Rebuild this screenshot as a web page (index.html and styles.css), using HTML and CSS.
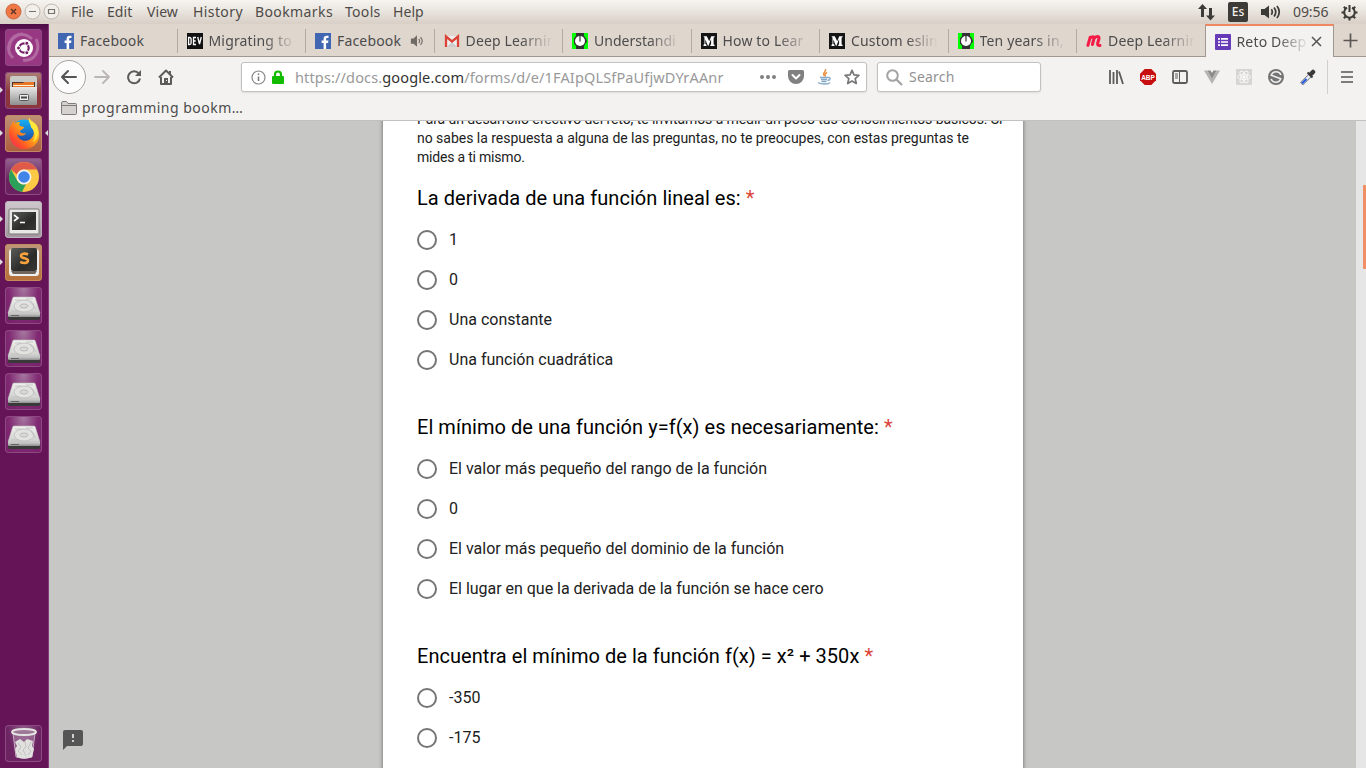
FILE: index.html
```html
<!DOCTYPE html>
<html lang="es">
<head>
<meta charset="utf-8">
<title>Reto Deep Learning</title>
<link rel="stylesheet" href="styles.css">
</head>
<body>
<svg class="defs" width="0" height="0">
  <defs>
    <linearGradient id="metal" x1="0" y1="0" x2="0" y2="1"><stop offset="0" stop-color="#e9e9e9"/><stop offset="1" stop-color="#8f8f8f"/></linearGradient>
    <linearGradient id="plate" x1="0" y1="0" x2="0" y2="1"><stop offset="0" stop-color="#f1f1ef"/><stop offset="1" stop-color="#cfcfcd"/></linearGradient>
    <linearGradient id="flame" x1="1" y1="0" x2="0" y2="1"><stop offset="0" stop-color="#fff24a"/><stop offset=".45" stop-color="#ffa016"/><stop offset=".75" stop-color="#ff4b2b"/><stop offset="1" stop-color="#e3257b"/></linearGradient>
    <linearGradient id="globe" x1="0" y1="0" x2="0" y2="1"><stop offset="0" stop-color="#16b0f4"/><stop offset="1" stop-color="#203a9c"/></linearGradient>
    <linearGradient id="dark" x1="0" y1="0" x2="1" y2="1"><stop offset="0" stop-color="#5a5c58"/><stop offset=".6" stop-color="#2b2c2a"/><stop offset="1" stop-color="#383936"/></linearGradient>
  </defs>
  <symbol id="facebook" viewBox="0 0 16 16"><path fill="#4267b2" d="M0 0h16v16H0z"/><path fill="#fff" d="M8.600 16V10H6.600V7.500h2V5.800c0-2 1.200-3.100 3-3.100h1.900V5h-1.200c-1 0-1.200.5-1.200 1.200v1.300h2.300l-.3 2.500h-2v6z"/></symbol>
  <symbol id="medium" viewBox="0 0 16 16"><path fill="#151515" d="M0 0h16v16H0z"/><path fill="#fff" d="M2.500 3.200h3.300l2.400 5.100 2.100-5.100h3.300v.7l-1 .8v6.600l1 .8v.8H9.200v-.8l.9-.8V6L7.500 12.700h-.6L4.300 6.500v4.300l1.200 1.300v.8h-3v-.8l1-1.300v-6z"/></symbol>
  <symbol id="watch" viewBox="0 0 16 16"><path fill="#0f0" d="M0 0h16v16H0z"/><path fill="#333" d="M4 0h8v3l2 2.300v1.200h.8v3H14L12 13v3H4v-3L2 10.500V5.300L4 3z"/><circle cx="8" cy="8" r="5" fill="#fff"/><path stroke="#333" stroke-width="1.200" d="M8 3v5.500"/></symbol>
  <symbol id="meetup" viewBox="0 0 16 16"><path fill="none" stroke="#f61b47" stroke-width="3" stroke-linecap="round" stroke-linejoin="round" d="M1.900 12.400 4.200 4.200M4 5.500C5.500 3.200 8.500 3 8 5.500L6.400 11.500M8 5.500C9.800 3 13.600 2.800 13 5.500L11.600 10.500q-.4 2.300 2.400 2"/></symbol>
  <symbol id="speaker" viewBox="0 0 16 16"><path fill="currentColor" d="M1 5h3l4-3.500v13L4 11H1z"/><path fill="none" stroke="currentColor" stroke-width="1.300" d="M10 5.500q2 2.500 0 5M12 3.500q4 4.500 0 9"/></symbol>
  <symbol id="disk" viewBox="0 0 34 30"><path fill="#393939" d="M1 20h32v5q0 2-2 2H3q-2 0-2-2z"/><path fill="url(#metal)" d="M1 19h32v4q0 1-1 1H2q-1 0-1-1z"/><path fill="url(#plate)" stroke="#bbb" stroke-width=".6" d="M7 4h20q1 0 1.300 1L33 20H1L5.700 5Q6 4 7 4z"/><ellipse cx="17" cy="13" rx="10" ry="6" fill="#e2e2e0" stroke="#c3c3c1"/><ellipse cx="17" cy="13" rx="4" ry="2" fill="#dadad8" stroke="#bbb"/><path fill="none" stroke="#bbb" stroke-width=".8" d="M8 7h6M19 6h7M23 8l6 8M4 18h8"/><path stroke="#666" d="M4 22.500h8"/></symbol>
</svg>

<header class="panel">
  <div class="winbtns">
    <svg width="60" height="24" viewBox="0 0 60 24"><circle cx="13.500" cy="11.500" r="7.500" fill="#f07746" stroke="#cc663c"/><path d="m11 9 5 5m0-5-5 5" stroke="#5b3527" stroke-width="1.400"/><g fill="#f2eeea" stroke="#bcb5ae"><circle cx="32.500" cy="11.500" r="7.500"/><circle cx="51.500" cy="11.500" r="7.500"/></g><path d="M29 11.500h7M48.500 9.500h6v4h-6z" stroke="#77726d" stroke-width="1.200" fill="none"/></svg>
  </div>
  <nav class="menu"><span class="m-file">File</span><span class="m-edit">Edit</span><span class="m-view">View</span><span class="m-history">History</span><span class="m-bookmarks">Bookmarks</span><span class="m-tools">Tools</span><span>Help</span></nav>
  <div class="tray">
    <svg class="net" width="17" height="17" viewBox="0 0 17 17"><path fill="#3c3b37" d="M4.500 0 9 5H6v8H3V5H0zM12.500 16.500 17 11.500h-3V4h-3v7.500H8z"/></svg>
    <span class="lang">Es</span>
    <svg class="vol" width="20" height="16" viewBox="0 0 20 16"><path fill="#3c3b37" d="M0 5h3.500L8 1.500v13L3.500 11H0z"/><path fill="none" stroke="#3c3b37" stroke-width="1.700" d="M10.300 5.300q2 2.700 0 5.400M13 3.500q3.500 4.500 0 9M16 2q4.500 6 0 12"/></svg>
    <time class="clock">09:56</time>
    <svg class="gear" width="17" height="17" viewBox="0 0 17 17"><g stroke="#3c3b37" fill="none" stroke-width="2"><path d="M6 3.700a5.300 5.300 0 1 0 5 0"/><path d="M8.500 1v7M.5 8.500h3M13.500 8.500h3M2.800 2.800 5 5M14.200 2.800 12 5M2.800 14.200 5 12M14.200 14.200 12 12M8.500 13.500v3"/></g></svg>
  </div>
</header>

<div class="desktop">
  <aside class="launcher">
    <div class="tile dash"><svg width="37" height="37" viewBox="0 0 37 37"><g fill="none" stroke="#fff" stroke-opacity=".25" stroke-width="3"><path d="M4 20C5 7 17 1 27 10M31 10c5 10-1 23-13 21M8 29C-1 20 5 5 18 5"/></g><circle cx="19" cy="19" r="9" fill="#fff"/><circle cx="19" cy="19" r="4.700" fill="none" stroke="#762065" stroke-width="2.200"/><g fill="#762065" stroke="#fff"><circle cx="13.500" cy="19" r="2"/><circle cx="21.800" cy="14.300" r="2"/><circle cx="21.800" cy="23.700" r="2"/></g></svg></div>
    <div class="tile files running"><svg width="37" height="37" viewBox="0 0 37 37"><path fill="#c9c9c6" d="M7 4h23q2 0 2 2v26H5V6q0-2 2-2z"/><path fill="#50352a" d="M7 10h23v6H7z"/><path fill="#e97527" d="M8 11h10l1-1h10v5H8z"/><path fill="#fff3d5" d="M8 13h21v1H8z"/><path fill="url(#metal)" d="M5 15h27v17q0 1-1 1H6q-1 0-1-1z"/><rect x="14.500" y="22.500" width="9" height="6" rx="1" fill="#eee" stroke="#555"/><path stroke="#444" stroke-width="2" d="M16 25.500h6"/></svg></div>
    <div class="tile firefox running focused"><svg width="37" height="37" viewBox="0 0 37 37"><circle cx="19" cy="17" r="12.500" fill="url(#globe)"/><path fill="url(#flame)" d="M4 17C4 12 7 8 9 6v3c2-2 4-2 6-2-1 2-1 3 0 4l4 1c0 2-4 3-4 4 0 2 3 3 6 2-2 4-7 3-9 1 1 6 7 8 12 6 6-3 6-10 2-13l1-1c-1-4-4-5-3-8 2 4 6 4 8 8 6 12-1 23-13 23C10 34 4 27 4 17z"/><path fill="#ffe83b" d="M24 3c2 4 6 4 8 8 2 7 1 13-4 16 3-6 2-11-2-15 0-3-3-5-2-9z"/></svg></div>
    <div class="tile chrome"><svg width="37" height="37" viewBox="0 0 37 37"><circle cx="19" cy="19" r="15" fill="#fbc943"/><path fill="#df5a4b" d="M6 11.500A15 15 0 0 1 32 11.500H19a7.500 7.500 0 0 0-7 5z"/><path fill="#2ba05b" d="M6 11.500 12.500 23A7.500 7.500 0 0 0 21 26l-4 8A15 15 0 0 1 6 11.500z"/><circle cx="19" cy="19" r="7.400" fill="#f3f3f3"/><circle cx="19" cy="19" r="5.800" fill="#4285e8"/></svg></div>
    <div class="tile term running"><svg width="37" height="37" viewBox="0 0 37 37"><rect x="4" y="8" width="30" height="25" rx="1" fill="#e8e8e6" stroke="#777"/><path fill="url(#dark)" d="M7 11h24v18H7z"/><path fill="none" stroke="#fff" stroke-width="1.600" d="m9 14 4 3-4 3M15 21.500h5"/></svg></div>
    <div class="tile sublime running"><svg width="37" height="37" viewBox="0 0 37 37"><rect x="4" y="5" width="30" height="27" rx="3" fill="#eee"/><path fill="#70665d" d="M6 27h26l-2 3H8z"/><rect x="6" y="4" width="26" height="23" rx="2" fill="url(#dark)"/><path fill="none" stroke="#f8a33b" stroke-width="2.600" d="M23 10.500c-2.600-1.300-7-1.200-7 1.500s7 2 7 4.600-4.400 3-7.800 1.300"/></svg></div>
    <div class="tile"><svg class="drive"><use href="#disk"/></svg></div>
    <div class="tile"><svg class="drive"><use href="#disk"/></svg></div>
    <div class="tile"><svg class="drive"><use href="#disk"/></svg></div>
    <div class="tile"><svg class="drive"><use href="#disk"/></svg></div>
    <div class="tile trash"><svg width="37" height="37" viewBox="0 0 37 37"><path fill="#fff" fill-opacity=".2" stroke="#d8c8d5" stroke-width=".8" d="m8 8 3 24q8 3 16 0l3-24"/><ellipse cx="19" cy="7" rx="12" ry="3" fill="#9d7897" stroke="#e5e5e3" stroke-width="2"/><path fill="#e0e0de" d="m10 17 5-3 4 3 3-3 6 2-1 5 2 3-2 8q-8 3-15 0l-2-8 2-3z"/><path fill="none" stroke="#c2c2c0" d="m13 18 3 4-3 4 4 4M20 17l1 5-3 3 3 6M26 17l-3 6 3 3-3 4"/></svg></div>
  </aside>

  <main class="browser">
    <div class="tabs">
      <div class="tab"><svg class="fav"><use href="#facebook"/></svg><span class="label">Facebook</span></div>
      <div class="tab"><svg class="fav" viewBox="0 0 16 16"><path fill="#111" d="M0 0h16v16H0z"/><path fill="none" stroke="#fff" stroke-width="1.300" d="M1.600 4.500v7h1q1.500 0 1.500-1.500V6q0-1.500-1.500-1.500zM9 4.500H6.500v7H9M6.500 8h2.200M10.700 4l1.800 7 1.800-7"/></svg><span class="label fade">Migrating to</span></div>
      <div class="tab"><svg class="fav"><use href="#facebook"/></svg><span class="label">Facebook</span><svg class="sound"><use href="#speaker"/></svg></div>
      <div class="tab"><svg class="fav" viewBox="0 0 16 16"><path fill="#eee" d="M1 3h14v11H1z"/><path fill="#ccc" d="m3 14 5-5 5 5z"/><path fill="none" stroke="#da4336" stroke-width="2.300" d="M2 14V3.500l6 5 6-5V14"/></svg><span class="label fade">Deep Learnin</span></div>
      <div class="tab"><svg class="fav"><use href="#watch"/></svg><span class="label fade tight">Understandi</span></div>
      <div class="tab"><svg class="fav"><use href="#medium"/></svg><span class="label fade">How to Lear</span></div>
      <div class="tab"><svg class="fav"><use href="#medium"/></svg><span class="label fade">Custom eslin</span></div>
      <div class="tab"><svg class="fav"><use href="#watch"/></svg><span class="label fade">Ten years in,</span></div>
      <div class="tab last"><svg class="fav"><use href="#meetup"/></svg><span class="label fade">Deep Learnin</span></div>
      <div class="tab active"><svg class="fav" viewBox="0 0 16 16"><rect width="16" height="16" rx="1" fill="#673ab7"/><path stroke="#fff" stroke-width="1.700" d="M3 4.800h2M6 4.800h7M3 8h2M6 8h7M3 11.200h2M6 11.200h7"/></svg><span class="label fade short">Reto Deep</span><svg class="close" width="11" height="11"><path d="m1 1 9 9m0-9-9 9" stroke="#555" stroke-width="1.500"/></svg></div>
      <div class="newtab"><svg width="15" height="15"><path d="M7.500.5v14M.5 7.500h14" stroke="#5c5753" stroke-width="1.700"/></svg></div>
    </div>

    <div class="toolbar">
      <button class="back"><svg width="18" height="16" viewBox="0 0 18 16"><path fill="none" stroke="#555" stroke-width="2" stroke-linecap="round" stroke-linejoin="round" d="M16 8H2m6-6L2 8l6 6"/></svg></button>
      <svg class="nav" viewBox="0 0 16 16"><path fill="none" stroke="#b9b7b4" stroke-width="1.800" stroke-linecap="round" stroke-linejoin="round" d="M1 8h14M9 2l6 6-6 6"/></svg>
      <svg class="nav" viewBox="0 0 16 16"><path fill="none" stroke="#5b5b5a" stroke-width="2" d="M12.800 4.500A6 6 0 1 0 14 9.500"/><path fill="#5b5b5a" d="M15 1v6H9z"/></svg>
      <svg class="nav" viewBox="0 0 16 16"><path fill="none" stroke="#5b5b5a" stroke-width="2" stroke-linejoin="round" d="M1 8.500 8 1.500l7 7M3 8v7h10V8"/><path fill="#5b5b5a" d="M6 9h4v6H6zM11 2h2v4h-2z"/><path fill="#f4f2f0" d="M8 11h1v1H8z"/></svg>
      <div class="urlbar">
        <svg class="info" width="15" height="15"><circle cx="7.500" cy="7.500" r="6.500" fill="none" stroke="#888" stroke-width="1.200"/><path stroke="#777" stroke-width="1.500" d="M7.500 6.500V11M7.500 3.500V5"/></svg>
        <svg class="lock" width="12" height="14"><path fill="none" stroke="#12bc00" stroke-width="2.200" d="M3 7V4.500a3 3 0 0 1 6 0V7"/><rect y="6" width="12" height="8" rx="1" fill="#12bc00"/></svg>
        <span class="url">https://docs.<b>google.com</b>/forms/d/e/1FAIpQLSfPaUfjwDYrAAnr</span>
        <svg class="dots" width="16" height="4"><g fill="#808080"><circle cx="2" cy="2" r="2"/><circle cx="8" cy="2" r="2"/><circle cx="14" cy="2" r="2"/></g></svg>
        <svg class="pocket" width="16" height="14" viewBox="0 0 16 14"><path fill="#808080" d="M1.500 0h13Q16 0 16 1.500V6A8 8 0 0 1 0 6V1.500Q0 0 1.500 0z"/><path fill="none" stroke="#fff" stroke-width="2" stroke-linecap="round" stroke-linejoin="round" d="m4.500 5 3.500 3.500L11.500 5"/></svg>
        <svg class="java" width="13" height="16" viewBox="0 0 13 16"><path fill="none" stroke="#ee8d3c" stroke-width="1.400" d="M7.500 0c1 3-4 3.500-1 7M9 3.500C6 5 7 6 7.500 7.500"/><path fill="none" stroke="#83a8c5" stroke-width="1.300" d="M2 8.500h8M3 10.500h6M3.500 12.500h5M10 8.500c3-.5 3 2.500-.5 3M0 13.500c2 2 11 2 12 0"/></svg>
        <svg class="star" width="16" height="16" viewBox="0 0 16 16"><path fill="none" stroke="#777" stroke-width="1.700" stroke-linejoin="round" d="m8 1.300 2 4.500 4.900.5-3.700 3.300 1.100 4.900L8 12l-4.300 2.500 1.100-4.900L1.100 6.300 6 5.800z"/></svg>
      </div>
      <div class="search"><svg width="17" height="17"><circle cx="6.500" cy="6.500" r="5.300" fill="none" stroke="#a3a3a3" stroke-width="2"/><path d="m10.500 10.500 5.500 5.500" stroke="#a3a3a3" stroke-width="2.200"/></svg><span>Search</span></div>
      <div class="tools">
        <svg viewBox="0 0 16 16"><path stroke="#5b5b5a" stroke-width="1.800" d="M2 1v14M5.500 3v12M9 1v14M11 2.500 15 15"/></svg>
        <svg viewBox="0 0 16 16"><path fill="#c70d0d" d="M4.700 0h6.600L16 4.700v6.600L11.300 16H4.700L0 11.300V4.700z"/><text x="8" y="10.500" text-anchor="middle" class="abp">ABP</text></svg>
        <svg viewBox="0 0 16 16"><rect x="1" y="2" width="14" height="12" rx="1.500" fill="none" stroke="#5b5b5a" stroke-width="1.800"/><path stroke="#5b5b5a" d="M7.500 2v12M3 5h3M3 7h3M3 9h3"/></svg>
        <svg viewBox="0 0 16 16"><path fill="#b5b4b3" d="M0 1.500h3.500L8 9l4.500-7.500H16L8 15z"/><path fill="#8b8a89" d="M3.500 1.500h3L8 4l1.500-2.500h3L8 9.500z"/></svg>
        <svg viewBox="0 0 16 16"><path fill="#d6d5d3" d="M0 0h16v16H0z"/><g fill="none" stroke="#f7f7f6"><ellipse cx="8" cy="8" rx="6.500" ry="2.500"/><ellipse cx="8" cy="8" rx="6.500" ry="2.500" transform="rotate(60 8 8)"/><ellipse cx="8" cy="8" rx="6.500" ry="2.500" transform="rotate(120 8 8)"/></g><circle cx="8" cy="8" r="1.500" fill="#fff"/></svg>
        <svg viewBox="0 0 16 16"><circle cx="8" cy="8" r="8" fill="#747474"/><path fill="none" stroke="#eee" stroke-width="1.600" d="M13 6A5.200 5.200 0 0 0 3.300 6.300L12.700 9.700A5.200 5.200 0 0 1 3 10"/></svg>
        <svg viewBox="0 0 16 16"><path stroke="#777" stroke-width="4" d="M1.500 15 10 6.500"/><path stroke="#e5ecfb" stroke-width="2.500" d="M2 14.500 10 6.500"/><path stroke="#2559de" stroke-width="2.200" d="M2 14.500 6.500 10"/><path stroke="#393939" stroke-width="4.500" stroke-linecap="round" d="m11 5 2-2"/><path stroke="#393939" stroke-width="2" d="m7.500 3.500 5 5"/></svg>
      </div>
      <div class="burger"><svg width="12" height="12"><path stroke="#555" stroke-width="1.700" d="M0 1h12M0 6h12M0 11h12"/></svg></div>
    </div>

    <div class="bookmarks"><svg width="16" height="14" viewBox="0 0 16 14"><path fill="#d4d1ce" stroke="#7d7a77" d="M.5 2Q.5.500 2 .5h3.500L7 2.500h7.500q1 0 1 1v9q0 1-1 1h-13q-1 0-1-1z"/><path stroke="#7d7a77" d="M1 4.500h14"/></svg><span>programming bookm…</span></div>

    <div class="viewport">
      <div class="sheet">
        <p class="intro"><span class="l1">Para un desarrollo efectivo del reto, te invitamos a medir un poco tus conocimientos básicos. Si</span><br><span class="l2">no sabes la respuesta a alguna de las preguntas, no te preocupes, con estas preguntas te</span><br><span class="l3">mides a ti mismo.</span></p>
        <section class="question">
          <h2>La derivada de una función lineal es: <em>*</em></h2>
          <label><i></i>1</label><label><i></i>0</label><label><i></i>Una constante</label><label><i></i>Una función cuadrática</label>
        </section>
        <section class="question">
          <h2>El mínimo de una función y=f(x) es necesariamente: <em>*</em></h2>
          <label><i></i>El valor más pequeño del rango de la función</label><label><i></i>0</label><label><i></i>El valor más pequeño del dominio de la función</label><label class="snug"><i></i>El lugar en que la derivada de la función se hace cero</label>
        </section>
        <section class="question">
          <h2>Encuentra el mínimo de la función f(x) = x² + 350x <em>*</em></h2>
          <label><i></i>-350</label><label><i></i>-175</label>
        </section>
      </div>
      <svg class="feedback" width="20" height="20" viewBox="0 0 20 20"><path fill="#555" d="M2 0h16q2 0 2 2v12q0 2-2 2H4l-4 4V2q0-2 2-2z"/><path stroke="#d0d0ce" stroke-width="2" d="M10 4v4M10 10v2"/></svg>
      <div class="scroll"><div class="thumb"></div></div>
    </div>
  </main>
</div>
</body>
</html>
```
FILE: styles.css
```css
* { box-sizing: border-box; }
body { margin: 0; width: 1366px; height: 768px; overflow: hidden; display: flex; flex-direction: column; font: 14px/20px "Noto Sans", sans-serif; color: #4c4c4c; }
svg { display: block; flex: none; }
.defs { position: absolute; }

.panel { height: 24px; flex: none; display: flex; align-items: center; background: linear-gradient(#f6f4f1, #eae5df 45%, #d8cfc6); }
.winbtns { width: 71px; }
.menu { display: flex; color: #4e4b48; letter-spacing: .06px; }
.menu span { white-space: nowrap; }
.m-file { width: 36px; }
.m-edit { width: 40px; }
.m-view { width: 46px; }
.m-history { width: 62px; letter-spacing: .4px; }
.m-bookmarks { width: 90px; letter-spacing: .4px; }
.m-tools { width: 48px; letter-spacing: .3px; }
.tray { margin-left: auto; display: flex; align-items: center; padding-right: 8px; color: #4e4b48; }
.net { margin-right: 13px; }
.lang { width: 20px; height: 20px; border-radius: 2px; background: #3c3b37; color: #f3efea; text-align: center; font-size: 12px; font-weight: 500; margin-right: 13px; }
.vol { margin-right: 12px; }
.clock { width: 36px; letter-spacing: -.1px; margin-right: 12px; }

.desktop { flex: 1; min-height: 0; display: flex; }
.launcher { width: 49px; flex: none; padding: 5px; display: flex; flex-direction: column; gap: 6px; background: linear-gradient(#4b0c43, #651457 8px); border-right: 1px solid #853a78; }
.tile { position: relative; width: 37px; height: 37px; flex: none; border-radius: 4px; background: radial-gradient(ellipse at 50% 0, #a77aa0, #812a73 55%, #731e67); box-shadow: inset 0 0 0 1px #8d4981; }
.dash { background: #983782; }
.files { background: linear-gradient(#ac8275, #8c353c 55%); }
.firefox { background: linear-gradient(#bf9377, #ad5c3b); box-shadow: inset 0 0 0 1px #c08a68; }
.chrome { background: linear-gradient(#94668f, #6b205f 60%); }
.term { background: linear-gradient(#d0c9ce, #a195a0); box-shadow: inset 0 0 0 1px #bcb0b9; }
.sublime { background: linear-gradient(#bd977b, #b66e35); box-shadow: inset 0 0 0 1px #c58c5a; }
.trash { margin-top: auto; margin-bottom: 1px; background: radial-gradient(ellipse at 50% 0, #8d5a86, #6c2361 65%); }
.drive { width: 34px; height: 30px; margin: 6px 0 0 1.500px; }
.running::before { content: ""; position: absolute; left: -5px; top: 15px; border: 3px solid transparent; border-left-color: #ddd; border-right: 0; }
.focused::after { content: ""; position: absolute; left: 40px; top: 15px; border: 3px solid transparent; border-right-color: #ddd; border-left: 0; }

.browser { flex: 1; min-width: 0; display: flex; flex-direction: column; background: #f4f2f0; }
.tabs { height: 33px; flex: none; display: flex; background: #dfd6ce; border-bottom: 1px solid #a09890; }
.tab { position: relative; width: 128.500px; flex: none; display: flex; align-items: center; padding-left: 9px; padding-top: 2px; }
.tab::after { content: ""; position: absolute; right: 0; top: 5px; height: 24px; width: 1px; background: #b3aaa3; }
.tab.last { width: 127.500px; }
.tab.last::after, .tab.active::after { display: none; }
.tab.active { height: 33px; width: 129px; background: #f4f2f0; border: 1px solid #a09890; border-bottom: 0; border-top: 2px solid #f08763; padding-top: 0; }
.fav { width: 16px; height: 16px; margin-right: 6px; }
.label { white-space: nowrap; font-size: 14px; letter-spacing: .16px; }
.fade { width: 88px; -webkit-mask-image: linear-gradient(90deg, #000 55px, transparent 87px); mask-image: linear-gradient(90deg, #000 55px, transparent 87px); }
.tight { letter-spacing: 0; }
.short { width: 70px; -webkit-mask-image: linear-gradient(90deg, #000 40px, transparent 72px); mask-image: linear-gradient(90deg, #000 40px, transparent 72px); }
.sound { width: 14px; height: 14px; margin-left: 9px; color: #716b66; }
.close { margin-left: 4px; }
.newtab { flex: 1; padding: 9px 0 0 9px; }

.toolbar { height: 40px; flex: none; display: flex; align-items: center; padding-left: 3px; }
.back { width: 34px; height: 34px; border: 1px solid #a5a3a1; border-radius: 50%; background: #fcfcfc; padding: 0; display: flex; align-items: center; justify-content: center; margin-right: 8px; }
.nav { width: 16px; height: 16px; margin-right: 16px; }
.urlbar { margin-left: 51px; width: 626px; height: 30px; display: flex; align-items: center; background: #fff; border: 1px solid #c3c1bf; border-radius: 3px; padding-left: 9px; font-size: 14.500px; box-shadow: 0 1px 2px #ddd; }
.info { margin-right: 6px; }
.lock { margin-right: 11px; }
.url { width: 430px; white-space: nowrap; color: #999; letter-spacing: .14px; }
.url b { font-weight: 400; color: #333; }
.dots { margin-left: 35px; margin-right: 12px; }
.pocket { margin-right: 14px; }
.java { margin-right: 13px; }
.search { margin-left: 10px; width: 164px; height: 30px; display: flex; align-items: center; gap: 6px; background: #fff; border: 1px solid #c3c1bf; border-radius: 3px; padding-left: 8px; color: #929292; box-shadow: 0 1px 2px #ddd; letter-spacing: .2px; }
.tools { margin-left: 67px; display: flex; gap: 16px; }
.tools svg { width: 16px; height: 16px; }
.abp { font: bold 6.500px "Liberation Sans", sans-serif; fill: #fff; }
.burger { margin-left: 11px; height: 34px; border-left: 1px solid #d2d0ce; display: flex; align-items: center; padding-left: 13px; }
.bookmarks { height: 24px; flex: none; display: flex; gap: 5px; align-items: center; padding-left: 12px; padding-bottom: 2px; border-bottom: 1px solid #c3c1bf; letter-spacing: .5px; }

.viewport { position: relative; flex: 1; min-height: 0; overflow: hidden; background: #c7c7c5; font-family: Roboto, sans-serif; color: #212121; }
.sheet { width: 640px; height: 700px; margin-left: 334px; margin-top: -11px; padding: 0 34px; background: #fff; box-shadow: 0 1px 4px rgba(0,0,0,.5); }
.intro { margin: 0; font-size: 14px; line-height: 19px; white-space: nowrap; }
.l1 { letter-spacing: -.075px; }
.l2 { letter-spacing: -.025px; }
.l3 { letter-spacing: -.2px; }
.question { height: 229px; padding-top: 18px; }
.question h2 { margin: 0 0 18px; font-size: 20px; line-height: 27px; font-weight: 400; color: #000; white-space: nowrap; letter-spacing: .045px; }
.question em { color: #db4437; font-style: normal; }
.question label { height: 20px; margin-bottom: 20px; display: flex; align-items: center; font-size: 16px; white-space: nowrap; }
.question .snug { letter-spacing: -.02px; }
.question i { width: 20px; height: 20px; border: 2px solid #757575; border-radius: 50%; margin-right: 12px; }
.feedback { position: absolute; left: 14px; top: 609px; }
.scroll { position: absolute; right: 0; top: 0; bottom: 0; width: 10px; background: #e6e6e6; padding: 64px 0 0 7px; }
.thumb { width: 3px; height: 84px; background: #f08f66; border-radius: 1px 0 0 1px; }
```
